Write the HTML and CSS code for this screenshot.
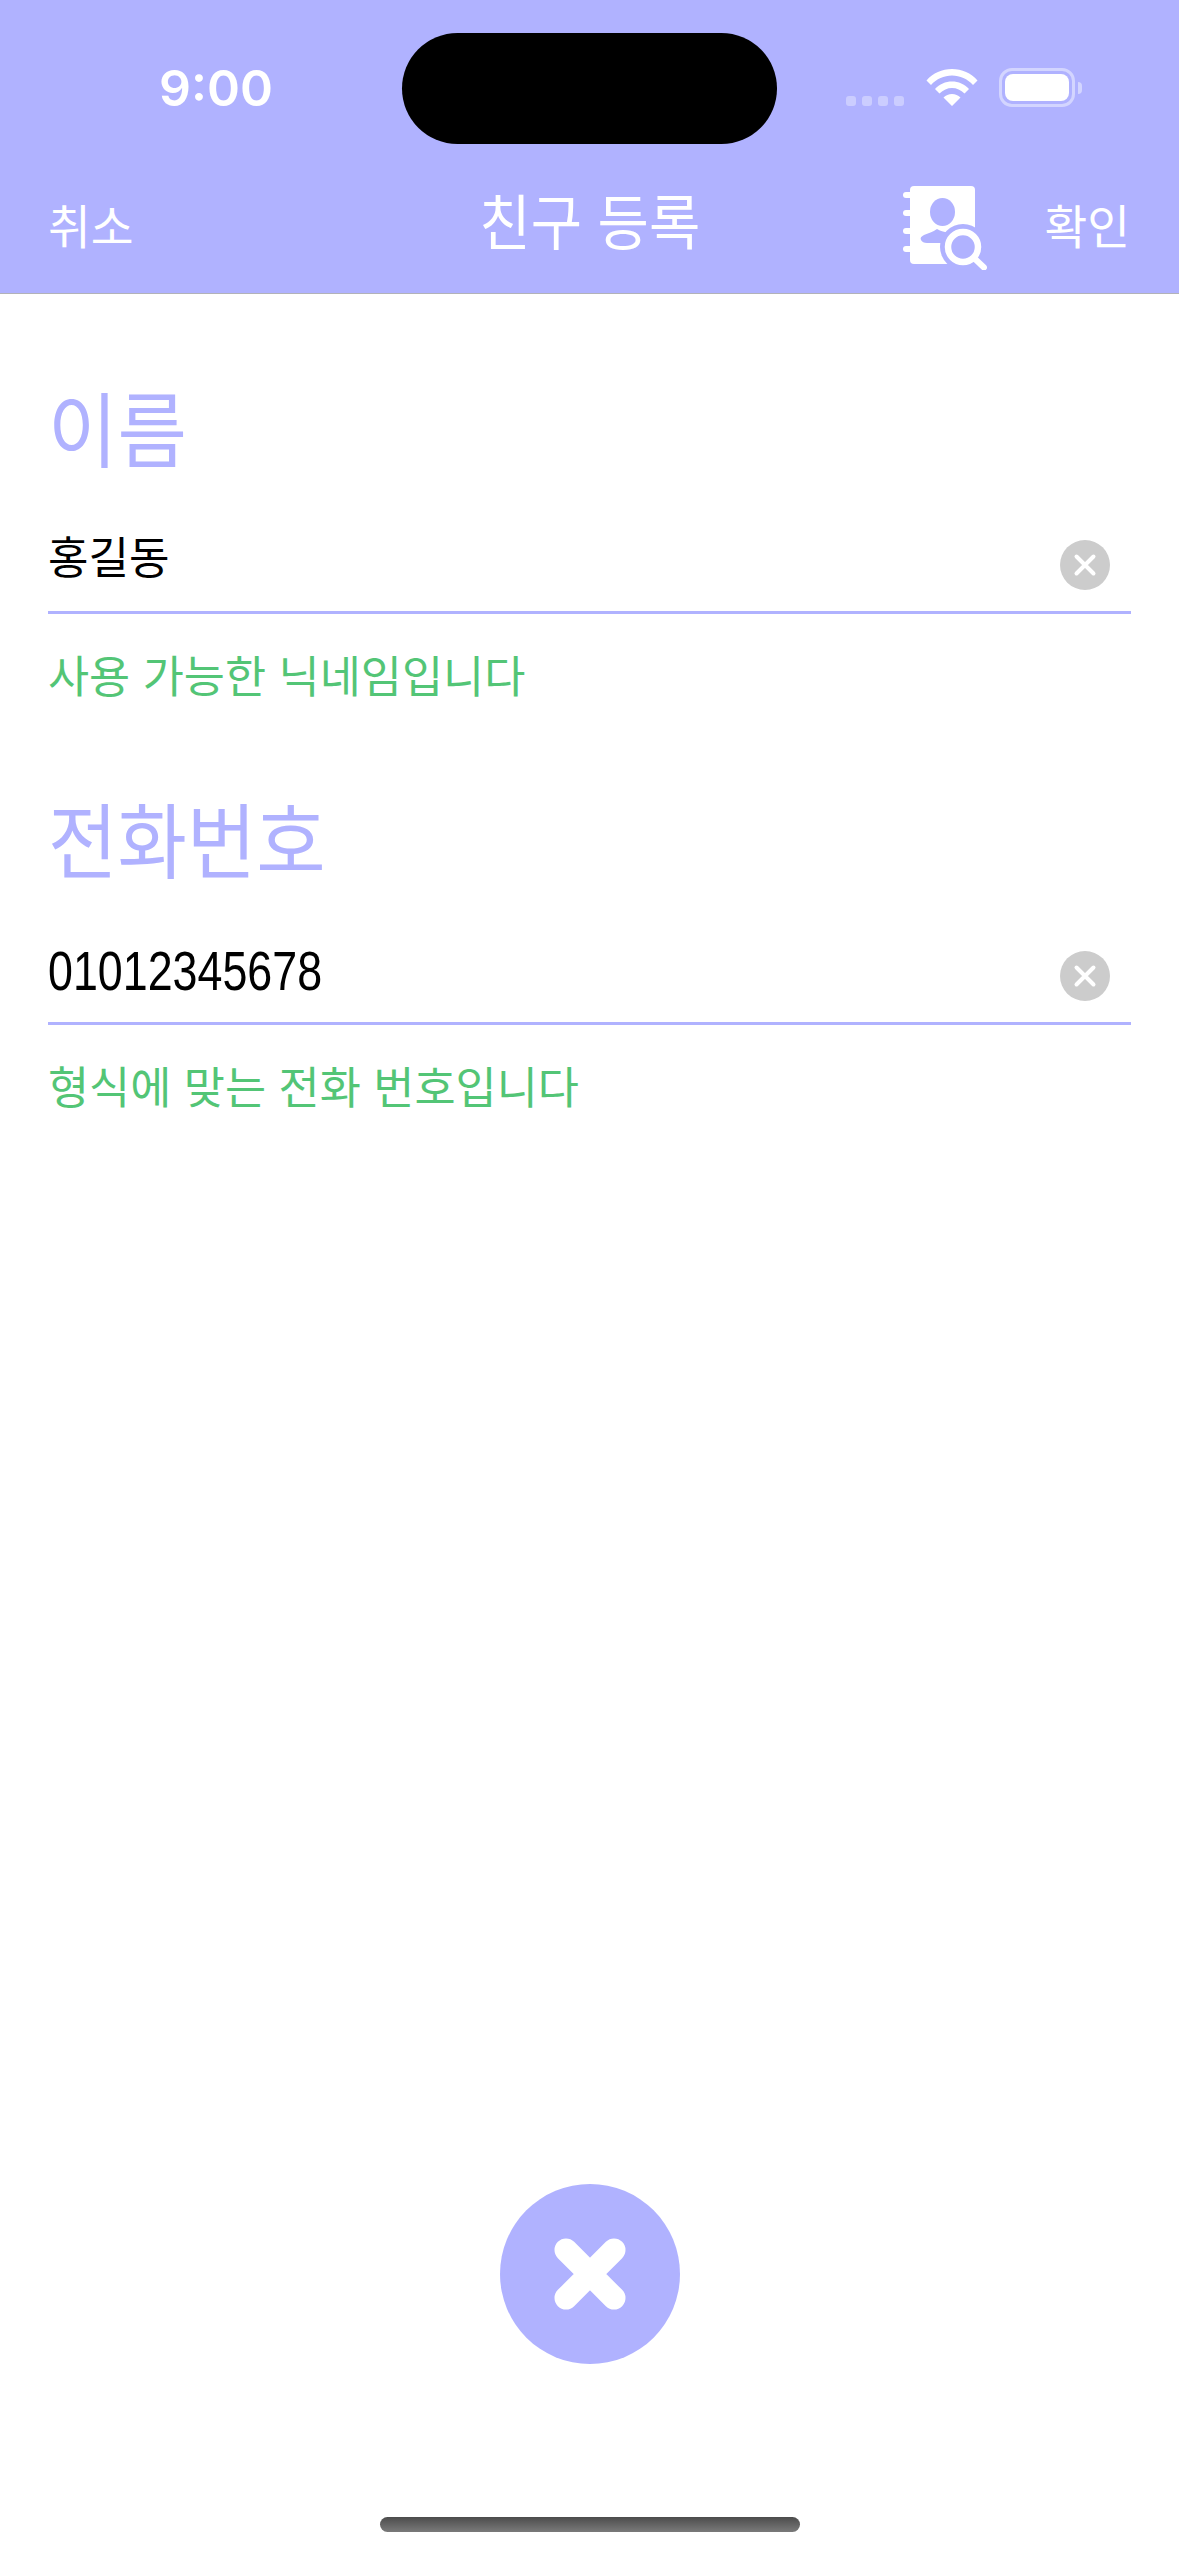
FILE: index.html
```html
<!DOCTYPE html>
<html lang="ko">
<head>
<meta charset="utf-8">
<title>친구 등록</title>
<link rel="stylesheet" href="styles.css">
</head>
<body>
<div class="page">
  <header class="header">
    <div class="status">
      <span class="time">9:00</span>
      <div class="island"></div>
      <div class="status-icons">
        <div class="signal"><i></i><i></i><i></i><i></i></div>
        <svg class="wifi" viewBox="0 0 52 38"><path d="M0.5 12.500C7 5 16 1 26 1s19 4 25.500 11.500l-4.500 4.500C41.500 11 34 7.500 26 7.500S10.500 11 5 17zM9 21c4.500-5 10.500-7.500 17-7.500S38.500 16 43 21l-4.500 4.500C35 22 30.500 20 26 20s-9 2-12.500 5.500zM17.500 29.500c2.300-2.200 5.300-3.500 8.500-3.500s6.200 1.300 8.500 3.500L26 38z" fill="#fff"/></svg>
        <div class="battery"><div class="battery-fill"></div></div>
        <div class="battery-cap"></div>
      </div>
    </div>
    <nav class="nav">
      <span class="nav-btn">취소</span>
      <span class="nav-title">친구 등록</span>
      <div class="nav-right">
        <svg class="contact" viewBox="0 0 84 84">
          <path d="M11 0H68a4 4 0 0 1 4 4V78H11a4 4 0 0 1-4-4V4a4 4 0 0 1 4-4z" fill="#fff"/>
          <g fill="#fff"><rect x="0" y="6" width="11" height="6" rx="3"/><rect x="0" y="24" width="11" height="6" rx="3"/><rect x="0" y="42" width="11" height="6" rx="3"/><rect x="0" y="60" width="11" height="6" rx="3"/></g>
          <ellipse cx="39.500" cy="26" rx="12.500" ry="14" fill="#b0b2ff"/>
          <path d="M34 43c-4 3-9 4-13 6-3 1.500-4 3-3 5 1 2 3 3 6 3H50V46c-5 1-11 0-16-3z" fill="#b0b2ff"/>
          <circle cx="60" cy="61" r="23" fill="#b0b2ff"/>
          <rect x="72" y="30" width="12" height="54" fill="#b0b2ff"/>
          <circle cx="60" cy="61" r="15" fill="none" stroke="#fff" stroke-width="6.500"/>
          <path d="M71.500 72.500l9.500 9" stroke="#fff" stroke-width="6" stroke-linecap="round"/>
        </svg>
        <span class="nav-btn confirm">확인</span>
      </div>
    </nav>
  </header>
  <main class="form">
    <section class="field">
      <h2 class="label">이름</h2>
      <div class="input-row">
        <span class="value">홍길동</span>
        <svg class="clear" viewBox="0 0 50 50"><circle cx="25" cy="25" r="25" fill="#ccc"/><path d="M16.500 16.500l17 17M33.500 16.500l-17 17" stroke="#fff" stroke-width="4" stroke-linecap="round"/></svg>
      </div>
      <p class="help">사용 가능한 닉네임입니다</p>
    </section>
    <section class="field">
      <h2 class="label">전화번호</h2>
      <div class="input-row">
        <span class="value digits">01012345678</span>
        <svg class="clear" viewBox="0 0 50 50"><circle cx="25" cy="25" r="25" fill="#ccc"/><path d="M16.500 16.500l17 17M33.500 16.500l-17 17" stroke="#fff" stroke-width="4" stroke-linecap="round"/></svg>
      </div>
      <p class="help">형식에 맞는 전화 번호입니다</p>
    </section>
  </main>
  <div class="fab-wrap">
    <button class="fab" type="button" aria-label="닫기">
      <svg class="fab-x" viewBox="0 0 72 72"><path d="M12 12l48 48M60 12L12 60" stroke="#fff" stroke-width="23" stroke-linecap="round"/></svg>
    </button>
  </div>
  <div class="home"></div>
</div>
</body>
</html>
```

FILE: styles.css
```css
* { box-sizing: border-box; }
html, body { margin: 0; padding: 0; background: #fff; }
body { font-family: "Noto Sans CJK KR", "Noto Sans", sans-serif; }
.page { width: 1179px; height: 2556px; display: flex; flex-direction: column; overflow: hidden; }

.header { height: 294px; background: #b0b2ff; border-bottom: 1px solid #b2b2b8; color: #fff; flex: none; }
.status { height: 177px; padding-top: 33px; display: flex; align-items: flex-start; }
.time { width: 402px; padding-left: 159px; padding-top: 24px; font: 600 50px/62px Inter, sans-serif; }
.island { width: 375px; height: 111px; border-radius: 56px; background: #000; flex: none; }
.status-icons { display: flex; align-items: flex-end; margin-top: 35px; margin-left: 69px; }
.signal { display: flex; gap: 6px; margin-right: 22px; }
.signal i { width: 10px; height: 10px; border-radius: 3px; background: rgba(255,255,255,.35); display: block; }
.wifi { width: 52px; height: 38px; margin-right: 21px; display: block; }
.battery { width: 76px; height: 39px; border: 3px solid rgba(255,255,255,.45); border-radius: 13px; padding: 3px; margin-bottom: -1px; }
.battery-fill { width: 100%; height: 100%; background: #fff; border-radius: 8px; }
.battery-cap { width: 4px; height: 12px; margin: 0 0 12px 3px; background: rgba(255,255,255,.45); border-radius: 0 4px 4px 0; }

.nav { display: grid; grid-template-columns: 1fr auto 1fr; align-items: center; padding: 7px 48px 0; }
.nav-btn { font-size: 46.500px; line-height: 60px; margin-bottom: 8px; }
.nav-title { font-size: 60px; line-height: 70px; margin-bottom: 17px; transform: scaleX(.93); }
.nav-right { display: flex; justify-content: flex-end; align-items: center; gap: 57px; }
.confirm { margin-right: 1px; }
.contact { width: 84px; height: 84px; display: block; }

.form { flex: 1; padding: 0 48px; }
.field { height: 411px; padding-top: 82px; }
.label { margin: 0; font-size: 82px; font-weight: 400; line-height: 100px; color: #b0b2ff; transform: scaleX(.92); transform-origin: left center; }
.input-row { height: 135px; margin-top: 3px; padding-bottom: 21px; border-bottom: 3px solid #b0b2ff; display: flex; justify-content: space-between; align-items: flex-end; }
.value { font-size: 44px; line-height: 70px; color: #000; }
.digits { font-family: "Liberation Sans", sans-serif; font-size: 56px; margin-bottom: -5px; transform: scaleX(.8); transform-origin: left center; }
.clear { width: 50px; height: 50px; display: block; margin-right: 21px; }
.help { margin: 0; padding-top: 25px; font-size: 44.700px; line-height: 70px; color: #53c576; }

.fab-wrap { display: flex; justify-content: center; flex: none; padding-bottom: 153px; }
.fab { width: 180px; height: 180px; border: 0; padding: 0; border-radius: 50%; background: #b0b2ff; display: flex; align-items: center; justify-content: center; }
.fab-x { width: 72px; height: 72px; display: block; }
.home { width: 420px; height: 15px; margin: 0 auto 24px; border-radius: 8px; background: linear-gradient(#4c4c4c, #7a7a7a); flex: none; }
```
